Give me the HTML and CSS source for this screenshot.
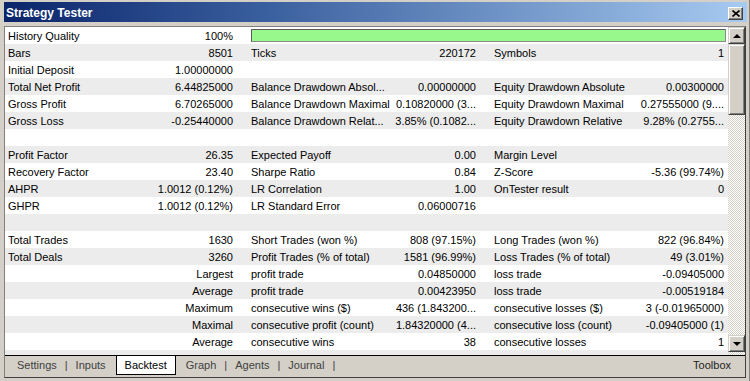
FILE: index.html
```html
<!DOCTYPE html>
<html>
<head>
<meta charset="utf-8">
<title>Strategy Tester</title>
<link rel="stylesheet" href="styles.css">
</head>
<body>
<div class="window">
  <div class="titlebar">
    <span class="title">Strategy Tester</span>
    <span class="close"><svg width="8" height="7" viewBox="0 0 8 7"><path d="M0.5 0.5 L7.5 6.5 M7.5 0.5 L0.5 6.5" stroke="#000" stroke-width="1.6" fill="none"/></svg></span>
  </div>
  <div class="panel">
    <div class="list">
      <div class="grid">
        <table>
          <colgroup>
            <col class="c1"><col class="c2"><col class="c3"><col class="c4"><col class="c5"><col class="c6">
          </colgroup>
          <tr><td class="l">History Quality</td><td class="v">100%</td><td colspan="4" class="barcell"><div class="qbar"></div></td></tr>
          <tr><td class="l">Bars</td><td class="v">8501</td><td class="l">Ticks</td><td class="v">220172</td><td class="l">Symbols</td><td class="v v3">1</td></tr>
          <tr><td class="l">Initial Deposit</td><td class="v">1.00000000</td><td></td><td></td><td></td><td></td></tr>
          <tr><td class="l">Total Net Profit</td><td class="v">6.44825000</td><td class="l">Balance Drawdown Absol...</td><td class="v">0.00000000</td><td class="l">Equity Drawdown Absolute</td><td class="v v3">0.00300000</td></tr>
          <tr><td class="l">Gross Profit</td><td class="v">6.70265000</td><td class="l">Balance Drawdown Maximal</td><td class="v">0.10820000 (3...</td><td class="l">Equity Drawdown Maximal</td><td class="v v3">0.27555000 (9....</td></tr>
          <tr><td class="l">Gross Loss</td><td class="v">-0.25440000</td><td class="l">Balance Drawdown Relat...</td><td class="v">3.85% (0.1082...</td><td class="l">Equity Drawdown Relative</td><td class="v v3">9.28% (0.2755...</td></tr>
          <tr><td></td><td></td><td></td><td></td><td></td><td></td></tr>
          <tr><td class="l">Profit Factor</td><td class="v">26.35</td><td class="l">Expected Payoff</td><td class="v">0.00</td><td class="l">Margin Level</td><td class="v v3"></td></tr>
          <tr><td class="l">Recovery Factor</td><td class="v">23.40</td><td class="l">Sharpe Ratio</td><td class="v">0.84</td><td class="l">Z-Score</td><td class="v v3">-5.36 (99.74%)</td></tr>
          <tr><td class="l">AHPR</td><td class="v">1.0012 (0.12%)</td><td class="l">LR Correlation</td><td class="v">1.00</td><td class="l">OnTester result</td><td class="v v3">0</td></tr>
          <tr><td class="l">GHPR</td><td class="v">1.0012 (0.12%)</td><td class="l">LR Standard Error</td><td class="v">0.06000716</td><td></td><td></td></tr>
          <tr><td></td><td></td><td></td><td></td><td></td><td></td></tr>
          <tr><td class="l">Total Trades</td><td class="v">1630</td><td class="l">Short Trades (won %)</td><td class="v">808 (97.15%)</td><td class="l">Long Trades (won %)</td><td class="v v3">822 (96.84%)</td></tr>
          <tr><td class="l">Total Deals</td><td class="v">3260</td><td class="l">Profit Trades (% of total)</td><td class="v">1581 (96.99%)</td><td class="l">Loss Trades (% of total)</td><td class="v v3">49 (3.01%)</td></tr>
          <tr><td></td><td class="v">Largest</td><td class="l">profit trade</td><td class="v">0.04850000</td><td class="l">loss trade</td><td class="v v3">-0.09405000</td></tr>
          <tr><td></td><td class="v">Average</td><td class="l">profit trade</td><td class="v">0.00423950</td><td class="l">loss trade</td><td class="v v3">-0.00519184</td></tr>
          <tr><td></td><td class="v">Maximum</td><td class="l">consecutive wins ($)</td><td class="v">436 (1.843200...</td><td class="l">consecutive losses ($)</td><td class="v v3">3 (-0.01965000)</td></tr>
          <tr><td></td><td class="v">Maximal</td><td class="l">consecutive profit (count)</td><td class="v">1.84320000 (4...</td><td class="l">consecutive loss (count)</td><td class="v v3">-0.09405000 (1)</td></tr>
          <tr><td></td><td class="v">Average</td><td class="l">consecutive wins</td><td class="v">38</td><td class="l">consecutive losses</td><td class="v v3">1</td></tr>
          <tr><td></td><td></td><td></td><td></td><td></td><td></td></tr>
        </table>
      </div>
      <div class="scrollbar">
        <div class="sbtn"><span class="arrow up"></span></div>
        <div class="thumb"></div>
        <div class="track"></div>
        <div class="sbtn"><span class="arrow down"></span></div>
      </div>
    </div>
    <div class="tabbar">
      <div class="tabs">
        <span class="tab">Settings</span><span class="sep">|</span>
        <span class="tab">Inputs</span>
        <span class="tab active">Backtest</span>
        <span class="tab">Graph</span><span class="sep">|</span>
        <span class="tab">Agents</span><span class="sep">|</span>
        <span class="tab">Journal</span><span class="sep">|</span>
      </div>
      <span class="toolbox">Toolbox</span>
    </div>
  </div>
</div>
</body>
</html>
```

FILE: styles.css
```css
* { box-sizing: border-box; }
html, body { margin: 0; padding: 0; }
body {
  width: 750px;
  height: 381px;
  overflow: hidden;
  background: #d4d0c8;
  font-family: "Liberation Sans", Arial, sans-serif;
  font-size: 11px;
  color: #000;
}
.window {
  width: 750px;
  height: 381px;
  padding: 2px 2px 3px 4px;
  background: #d4d0c8;
  border-right: 1px solid #808080;
  display: flex;
  flex-direction: column;
}
.titlebar {
  height: 20px;
  flex: none;
  display: flex;
  align-items: center;
  justify-content: space-between;
  padding: 0 4px 0 2px;
  background: linear-gradient(to right, #0a246a 0%, #3a5f9e 35%, #a6caf0 100%);
}
.title {
  color: #fff;
  font-weight: bold;
  font-size: 12px;
  padding-top: 1px;
}
.close {
  width: 15px;
  height: 13px;
  margin-top: 2px;
  display: flex;
  align-items: center;
  justify-content: center;
  background: #d4d0c8;
  border: 1px solid;
  border-color: #fff #404040 #404040 #fff;
  box-shadow: inset -1px -1px #808080;
}
.panel {
  margin-top: 4px;
  width: 742px;
  flex: 1;
  display: flex;
  flex-direction: column;
  border-left: 1px solid #808080;
  border-top: 1px solid #808080;
  border-right: 1px solid #404040;
  border-bottom: 1px solid #404040;
}
.list {
  height: 328px;
  flex: none;
  display: flex;
  background: #fff;
}
.grid {
  width: 723px;
  height: 328px;
  overflow: hidden;
}
table {
  width: 723px;
  table-layout: fixed;
  border-collapse: collapse;
}
col.c1 { width: 118px; }
col.c2 { width: 125px; }
col.c3 { width: 142px; }
col.c4 { width: 101px; }
col.c5 { width: 141px; }
col.c6 { width: 96px; }
tr:nth-child(even) td { background: #ececec; }
td {
  height: 17px;
  padding: 1px 0 0 0;
  line-height: 16px;
  white-space: nowrap;
  overflow: hidden;
}
.l { padding-left: 3px; text-align: left; }
.v { padding-right: 15px; text-align: right; }
.v3 { padding-right: 4px; }
.barcell { padding: 2px 2px 2px 3px; }
.qbar {
  height: 13px;
  background: #98f88c;
  border: 1px solid #5a5a5a;
  border-right-color: #8a8a8a;
  border-bottom-color: #8a8a8a;
}
.scrollbar {
  width: 17px;
  display: flex;
  flex-direction: column;
  background: repeating-conic-gradient(#d4d0c8 0 25%, #fff 0 50%) 0 0 / 2px 2px;
}
.sbtn, .thumb {
  background: #d4d0c8;
  border: 1px solid;
  border-color: #d4d0c8 #404040 #404040 #d4d0c8;
  box-shadow: inset 1px 1px #fff, inset -1px -1px #808080;
}
.sbtn {
  height: 17px;
  flex: none;
  display: flex;
  align-items: center;
  justify-content: center;
}
.sbtn:last-child { margin-bottom: 3px; }
.thumb { height: 71px; flex: none; }
.track { flex: 1; }
.arrow { width: 0; height: 0; border-left: 4px solid transparent; border-right: 4px solid transparent; }
.arrow.up { border-bottom: 4px solid #000; }
.arrow.down { border-top: 4px solid #000; }
.tabbar {
  flex: 1;
  display: flex;
  justify-content: space-between;
  align-items: flex-start;
  border-top: 1px solid #000;
}
.tabs {
  display: flex;
  align-items: flex-start;
  padding-left: 4px;
  color: #404040;
}
.tab {
  height: 19px;
  line-height: 18px;
  padding: 0 8px;
}
.sep { line-height: 18px; }
.tab.active {
  color: #000;
  background: #fff;
  border: 1px solid #000;
  border-top: none;
  margin: 0 2px;
}
.toolbox {
  line-height: 18px;
  padding-right: 14px;
  color: #202020;
}
```
